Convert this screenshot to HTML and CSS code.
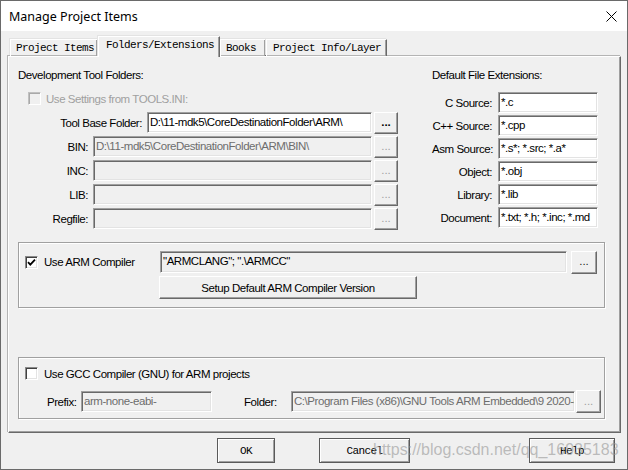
FILE: index.html
```html
<!DOCTYPE html>
<html>
<head>
<meta charset="utf-8">
<title>Manage Project Items</title>
<link rel="stylesheet" href="styles.css">
</head>
<body>
<div class="window">
  <div class="titlebar">
    <span class="title">Manage Project Items</span>
    <svg class="close" width="11" height="11" viewBox="0 0 11 11"><path d="M0.5 0.5 L10.5 10.5 M10.5 0.5 L0.5 10.5" stroke="#000" stroke-width="1"/></svg>
  </div>
  <div class="client">
    <div class="tabs">
      <div class="tab tab-items">Project Items</div>
      <div class="tab tab-active">Folders/Extensions</div>
      <div class="tab tab-books">Books</div>
      <div class="tab tab-info">Project Info/Layer</div>
    </div>
    <div class="panel">
      <div class="top">
        <div class="folders">
          <div class="heading">Development Tool Folders:</div>
          <div class="check-row settings disabled"><span class="checkbox"></span><span>Use Settings from TOOLS.INI:</span></div>
          <div class="frows">
            <div class="frow"><span class="lbl lbl-wide">Tool Base Folder:</span><span class="field field-base">D:\11-mdk5\CoreDestinationFolder\ARM\</span><span class="btn dots">...</span></div>
            <div class="frow"><span class="lbl">BIN:</span><span class="field field-path ro">D:\11-mdk5\CoreDestinationFolder\ARM\BIN\</span><span class="btn dots off">...</span></div>
            <div class="frow"><span class="lbl">INC:</span><span class="field field-path ro"></span><span class="btn dots off">...</span></div>
            <div class="frow"><span class="lbl">LIB:</span><span class="field field-path ro"></span><span class="btn dots off">...</span></div>
            <div class="frow"><span class="lbl">Regfile:</span><span class="field field-path ro"></span><span class="btn dots off">...</span></div>
          </div>
        </div>
        <div class="exts">
          <div class="heading">Default File Extensions:</div>
          <div class="erows">
            <div class="erow"><span class="elbl">C Source:</span><span class="field field-ext">*.c</span></div>
            <div class="erow"><span class="elbl">C++ Source:</span><span class="field field-ext">*.cpp</span></div>
            <div class="erow"><span class="elbl">Asm Source:</span><span class="field field-ext">*.s*; *.src; *.a*</span></div>
            <div class="erow"><span class="elbl">Object:</span><span class="field field-ext">*.obj</span></div>
            <div class="erow"><span class="elbl">Library:</span><span class="field field-ext">*.lib</span></div>
            <div class="erow"><span class="elbl">Document:</span><span class="field field-ext">*.txt; *.h; *.inc; *.md</span></div>
          </div>
        </div>
      </div>

      <div class="group arm">
        <div class="arm-row">
          <div class="check-row arm-check"><span class="checkbox checked"><svg width="9" height="9" viewBox="0 0 9 9"><path d="M1 4.2 L3.3 6.6 L8 1.6" fill="none" stroke="#000" stroke-width="1.8"/></svg></span><span>Use ARM Compiler</span></div>
          <span class="field field-arm ro-dark">"ARMCLANG"; ".\ARMCC"</span>
          <span class="btn dots dots-arm">...</span>
        </div>
        <div class="setup-row"><span class="btn setup">Setup Default ARM Compiler Version</span></div>
      </div>

      <div class="group gcc">
        <div class="check-row gcc-check"><span class="checkbox"></span><span>Use GCC Compiler (GNU) for ARM projects</span></div>
        <div class="gcc-row">
          <span class="glbl glbl-prefix">Prefix:</span>
          <span class="field field-prefix ro">arm-none-eabi-</span>
          <span class="glbl glbl-folder">Folder:</span>
          <span class="field field-folder ro">C:\Program Files (x86)\GNU Tools ARM Embedded\9 2020-q2-update</span>
          <span class="btn dots off dots-gcc">...</span>
        </div>
      </div>
    </div>
    <div class="buttons">
      <span class="pbtn ok">OK</span>
      <span class="pbtn cancel">Cancel</span>
      <span class="pbtn help">Help</span>
    </div>
  </div>
  <div class="watermark">https://blog.csdn.net/qq_16935183</div>
</div>
</body>
</html>
```

FILE: styles.css
```css
* { box-sizing: border-box; }
html, body { margin: 0; padding: 0; }
body {
  width: 628px;
  height: 470px;
  overflow: hidden;
  font-family: "Liberation Sans", Arial, sans-serif;
  font-size: 11.5px;
  letter-spacing: -0.45px;
  color: #000;
  background: #f0f0f0;
}
.window {
  position: relative;
  width: 628px;
  height: 470px;
  border: 1px solid #6a6a6a;
  background: #f0f0f0;
}
.titlebar {
  height: 30px;
  background: #fff;
  display: flex;
  align-items: center;
  justify-content: space-between;
  padding: 0 10px 0 8px;
}
.title {
  font-family: "Noto Sans", sans-serif;
  font-size: 12.5px;
  letter-spacing: 0;
  color: #000;
}
.close { display: block; }

.client { padding: 6px 0 0 7px; }

.tabs {
  display: flex;
  align-items: flex-end;
  height: 19px;
  padding-left: 2px;
  font-family: "Liberation Mono", monospace;
  font-size: 11px;
  letter-spacing: -0.6px;
}
.tab {
  height: 17px;
  padding-left: 5px;
  line-height: 17px;
  border-top: 1px solid #fff;
  border-left: 1px solid #fff;
  border-right: 1px solid #696969;
  box-shadow: inset -1px 0 #a0a0a0, -1px -1px 0 #e3e3e3;
  white-space: nowrap;
}
.tab-items { width: 88px; }
.tab-books { width: 46px; }
.tab-info { width: 121px; padding-left: 6px; }
.tab-active {
  position: relative;
  z-index: 1;
  width: 122px;
  height: 21px;
  margin-bottom: -1px;
  padding-left: 7px;
  line-height: 17px;
  background: #f0f0f0;
}

.panel {
  width: 613px;
  height: 377px;
  border: 1px solid;
  border-color: #fff #696969 #696969 #fff;
  box-shadow: inset -1px -1px #a0a0a0, -1px -1px 0 #b4b4b4;
  padding: 11px 0 13px 9px;
}

.top { display: flex; height: 161px; }
.folders { width: 380px; }
.exts { margin-left: 34px; }
.heading { height: 14px; line-height: 14px; }

.check-row { display: flex; align-items: center; white-space: nowrap; }
.checkbox {
  width: 13px;
  height: 13px;
  flex: none;
  border: 1px solid;
  border-color: #8a8a8a #fff #fff #8a8a8a;
  box-shadow: inset 1px 1px #404040, inset -1px -1px #e3e3e3;
  background: #fff;
  display: flex;
  align-items: center;
  justify-content: center;
  margin-right: 6px;
}
.checkbox svg { display: block; margin-top: 1px; }
.disabled { color: #a0a0a0; }
.disabled .checkbox {
  background: #f0f0f0;
  border-color: #c0c0c0 #fff #fff #c0c0c0;
  box-shadow: inset 1px 1px #a9a9a9, inset -1px -1px #f0f0f0;
}
.settings { height: 13px; margin: 10px 0 0 10px; }
.settings .checkbox { margin-right: 5px; }

.frows { display: flex; flex-direction: column; gap: 3px; margin-top: 7px; }
.frow { display: flex; align-items: center; height: 21px; }
.lbl { width: 70px; text-align: right; margin-right: 5px; flex: none; }
.lbl-wide { width: 124px; }

.field {
  display: block;
  height: 21px;
  border: 1px solid;
  border-color: #a0a0a0 #fff #fff #a0a0a0;
  box-shadow: inset 1px 1px #696969, inset -1px -1px #e3e3e3;
  background: #fff;
  padding: 2px 2px 0 2px;
  line-height: 14px;
  white-space: nowrap;
  overflow: hidden;
  flex: none;
}
.ro { background: #f0f0f0; color: #6d6d6d; }
.ro-dark { background: #f0f0f0; color: #000; }
.field-base { width: 225px; }
.field-path { width: 279px; }

.btn {
  display: flex;
  align-items: center;
  justify-content: center;
  border: 1px solid;
  border-color: #fff #696969 #696969 #fff;
  box-shadow: inset -1px -1px #a0a0a0;
  background: #f0f0f0;
  white-space: nowrap;
  flex: none;
}
.dots {
  width: 24px;
  height: 22px;
  margin-left: 2px;
  font-weight: bold;
  letter-spacing: 0;
  padding-bottom: 2px;
}
.dots.off { font-weight: normal; color: #a0a0a0; }

.erows { display: flex; flex-direction: column; gap: 2px; margin-top: 10px; }
.erow { display: flex; align-items: center; }
.elbl { width: 60px; text-align: right; margin-right: 6px; white-space: nowrap; }
.field-ext { width: 100px; }

.group {
  border: 1px solid #a0a0a0;
  box-shadow: inset 1px 1px #fff, 1px 1px 0 #fff;
  width: 587px;
}
.arm { margin-top: 13px; height: 66px; padding: 8px 0 0 6px; }
.arm-row { display: flex; align-items: center; height: 22px; }
.arm-check { width: 135px; height: 13px; }
.field-arm { width: 407px; height: 22px; padding-top: 2px; }
.dots-arm { width: 26px; height: 23px; margin-left: 4px; font-weight: normal; color: #222; }
.setup-row { margin-top: 3px; padding-left: 134px; }
.setup { width: 258px; height: 23px; }

.gcc { margin-top: 49px; height: 62px; padding: 9px 0 0 6px; }
.gcc-check { height: 13px; }
.gcc-row { display: flex; align-items: center; height: 23px; margin-top: 10px; padding-left: 22px; }
.glbl { flex: none; }
.glbl-prefix { width: 34px; }
.glbl-folder { width: 47px; margin-left: 32px; }
.field-prefix { width: 131px; }
.field-folder { width: 284px; }
.dots-gcc { width: 25px; height: 23px; margin-left: 1px; }

.buttons {
  display: flex;
  margin-top: 5px;
  height: 25px;
  font-family: "Liberation Mono", monospace;
  font-size: 11px;
  letter-spacing: -0.6px;
}
.pbtn {
  display: flex;
  align-items: center;
  justify-content: center;
  height: 25px;
  border: 1px solid #5a5a5a;
  box-shadow: inset 1px 1px #fff, inset -1px -1px #a0a0a0;
  background: #f0f0f0;
}
.ok { width: 58px; margin-left: 209px; }
.cancel { width: 91px; margin-left: 44px; }
.help { width: 86px; margin-left: 119px; }

.watermark {
  position: absolute;
  left: 372px;
  top: 440px;
  font-family: "Liberation Sans", Arial, sans-serif;
  font-size: 16px;
  letter-spacing: 0;
  color: rgba(150, 150, 150, 0.6);
  white-space: nowrap;
  pointer-events: none;
}
```
